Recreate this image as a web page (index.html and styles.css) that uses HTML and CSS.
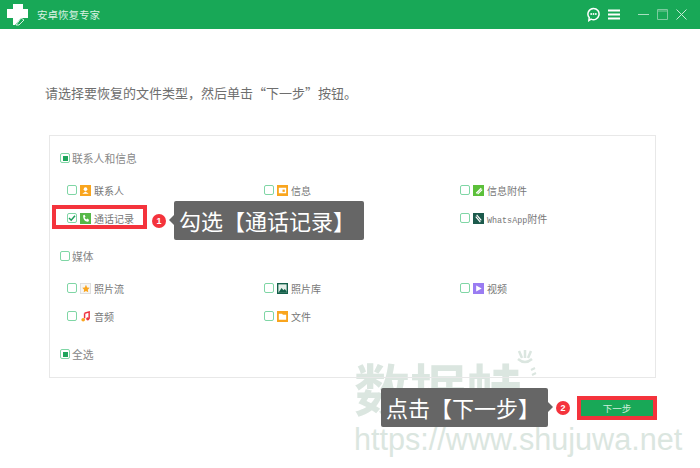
FILE: index.html
```html
<!DOCTYPE html>
<html lang="zh">
<head>
  <meta charset="UTF-8">
  <title>安卓恢复专家</title>
  <link rel="stylesheet" href="styles.css">
</head>
<body>
  <div class="titlebar">
    <svg class="logo" width="22" height="22" viewBox="0 0 22 22">
      <path d="M6 0H16V5H21V14H14L8 21H6V14H0V5H6Z" fill="#fff"/>
      <path d="M14 14L17 16L12 21H9Z" fill="none" stroke="#d5f0e0" stroke-width="1"/>
    </svg>
    <span class="app-name">安卓恢复专家</span>
    <div class="win-icons">
      <svg width="13" height="15" viewBox="0 0 14 15">
        <path d="M7 1a6 6 0 1 1-2.600 11.400L2 14l.4-3.200A6 6 0 0 1 7 1Z" fill="none" stroke="#fff" stroke-width="1.600"/>
        <circle cx="4.500" cy="7" r="1" fill="#fff"/><circle cx="7" cy="7" r="1" fill="#fff"/><circle cx="9.500" cy="7" r="1" fill="#fff"/>
      </svg>
      <svg class="menu-icon" width="12" height="11" viewBox="0 0 12 11">
        <path d="M0 1.500H12M0 5.500H12M0 9.500H12" stroke="#fff" stroke-width="2"/>
      </svg>
      <svg width="11" height="11" viewBox="0 0 11 11"><path d="M0 5.500H11" stroke="#a8dfc0"/></svg>
      <svg width="11" height="11" viewBox="0 0 11 11"><path d="M.5.5H10.500V10.500H.5ZM.5 2H10.500" fill="none" stroke="#7ccb9f"/></svg>
      <svg width="11" height="11" viewBox="0 0 11 11"><path d="M.5.5L10.500 10.500M10.500.5L.5 10.500" stroke="#c6ead6"/></svg>
    </div>
  </div>

  <div class="main">
    <p class="prompt">请选择要恢复的文件类型，然后单击“下一步”按钮。</p>

    <div class="card">
      <div class="group-head"><span class="check check-part"></span>联系人和信息</div>
      <div class="items">
        <div class="item"><span class="check"></span>
          <svg class="icon" viewBox="0 0 12 12"><rect width="12" height="12" fill="#f9a51e"/><circle cx="6" cy="4.500" r="2" fill="#fff"/><path d="M2.500 9.500L6 7l3.500 2.500Z" fill="#fff"/></svg>
          联系人</div>
        <div class="item"><span class="check"></span>
          <svg class="icon" viewBox="0 0 12 12"><rect width="12" height="12" fill="#f9a51e"/><rect x="2" y="3" width="8" height="6" fill="#fff"/><rect x="6" y="5" width="2.500" height="2.500" fill="#f9a51e"/></svg>
          信息</div>
        <div class="item"><span class="check"></span>
          <svg class="icon" viewBox="0 0 12 12"><rect width="12" height="12" fill="#5cc03a"/><path d="M3.500 9L9 3.500M5 10L10 5" stroke="#fff" stroke-width="1.400"/></svg>
          信息附件</div>

        <div class="item"><span class="check check-on"><svg viewBox="0 0 8 8"><path d="M1 4L3.200 6.200L7 1.800" fill="none" stroke="#1e9e5a" stroke-width="1.500"/></svg></span>
          <svg class="icon" viewBox="0 0 12 12"><rect width="12" height="12" fill="#55b848"/><path d="M3.500 2.500L5 2L6 4L5 5C5.500 6.200 6 6.800 7 7L8 6L10 7.500L9 9.500C6 10 3 7 3.500 2.500Z" fill="#fff"/></svg>
          通话记录</div>
        <div class="item"></div>
        <div class="item"><span class="check"></span>
          <svg class="icon" viewBox="0 0 12 12"><rect width="12" height="12" fill="#1c5a4c"/><path d="M3 4L8 10M4 2L9 8" stroke="#fff" stroke-width="1.300"/></svg>
          <span><span class="latin">WhatsApp</span>附件</span></div>
      </div>

      <div class="group-head media-head"><span class="check"></span>媒体</div>
      <div class="items">
        <div class="item"><span class="check"></span>
          <svg class="icon" viewBox="0 0 12 12"><rect x=".5" y=".5" width="11" height="11" fill="#f6f6f6" stroke="#ddd"/><path d="M6.500 2L7.800 5L10.500 5.300L8.500 7.300L9 10L6.500 8.600L4 10L4.500 7.300L2.500 5.300L5.200 5Z" fill="#f9a51e"/></svg>
          照片流</div>
        <div class="item"><span class="check"></span>
          <svg class="icon" viewBox="0 0 12 12"><rect width="12" height="12" fill="#14604a"/><rect x="1.500" y="1.500" width="9" height="9" fill="#e4efe9"/><path d="M1.500 10.500L5 5.500L7 8L8.500 6.500L10.500 9V10.500Z" fill="#14604a"/></svg>
          照片库</div>
        <div class="item"><span class="check"></span>
          <svg class="icon" viewBox="0 0 12 12"><rect width="12" height="12" fill="#9a7cf2"/><path d="M3.500 2.800L9.500 6L3.500 9.200Z" fill="#fff"/></svg>
          视频</div>

        <div class="item"><span class="check"></span>
          <svg class="icon" viewBox="0 0 12 12"><path d="M5 2.500L10 1V8.500" fill="none" stroke="#ee3340" stroke-width="1.600"/><path d="M5 2.500V8" stroke="#ee3340" stroke-width="1.600"/><circle cx="8.500" cy="8.500" r="1.800" fill="#ee3340"/><circle cx="3.500" cy="9.500" r="2" fill="#f9a51e"/></svg>
          音频</div>
        <div class="item"><span class="check"></span>
          <svg class="icon" viewBox="0 0 12 12"><rect width="12" height="12" fill="#f9a51e"/><path d="M2 3H5.500L6.500 4.200H10V9.500H2Z" fill="#fff"/></svg>
          文件</div>
      </div>

      <div class="group-head all-head"><span class="check check-part"></span>全选</div>

      <!-- annotations drawn over the first group -->
      <div class="red-box"></div>
      <div class="note-wrap">
        <span class="badge">1</span>
        <div class="callout callout-left">勾选【通话记录】</div>
      </div>
    </div>

    <div class="footer">
      <div class="callout callout-right">点击【下一步】</div>
      <span class="badge">2</span>
      <button class="next-btn">下一步</button>
    </div>
  </div>

  <div class="watermark">
    <div class="wm-cn">数据蛙</div>
    <div class="wm-url">https://www.shujuwa.net</div>
    <svg class="wm-paw" width="22" height="26" viewBox="0 0 22 26">
      <path d="M4 1L7 8M10 0V8M16 1L13 8M3 9Q10 15 17 9" fill="none" stroke="#dbe6e0" stroke-width="2.500"/>
      <path d="M16 20L20 18M17 25L21 23" stroke="#dbe6e0" stroke-width="2"/>
    </svg>
  </div>
</body>
</html>
```

FILE: styles.css
```css
html, body {
  margin: 0;
  padding: 0;
  height: 468px;
  overflow: hidden;
  background-color: #fff;
}
body {
  font-family: "Noto Sans CJK SC", sans-serif;
  color: #777;
  position: relative;
}
.titlebar {
  height: 29px;
  background-color: #18a857;
  display: flex;
  align-items: center;
  padding: 0 13px 0 7px;
  position: relative;
  z-index: 2;
}
.logo {
  margin-right: 8px;
}
.app-name {
  font-size: 10.500px;
  color: #d8f1e2;
}
.win-icons {
  margin-left: auto;
  display: flex;
  align-items: center;
  gap: 8px;
}
.menu-icon {
  margin-right: 10px;
}
.main {
  padding: 55px 44px 0 49px;
  position: relative;
  z-index: 1;
}
.prompt {
  margin: 0 0 33px -4px;
  font-size: 13px;
  line-height: 18px;
  color: #6e6e6e;
}
.card {
  border: 1px solid #e8e8e8;
  padding: 12px 10px 13px;
  position: relative;
}
.group-head {
  height: 20px;
  display: flex;
  align-items: center;
  gap: 2px;
  font-size: 10.800px;
  color: #888;
}
.media-head, .all-head {
  margin-top: 18px;
}
.items {
  display: grid;
  grid-template-columns: 197px 196px 1fr;
  grid-auto-rows: 20px;
  row-gap: 8px;
  margin-top: 12px;
  padding-left: 7px;
}
.item {
  display: flex;
  align-items: center;
  gap: 3px;
  font-size: 10px;
  color: #777;
}
.latin {
  font-family: "Liberation Mono", monospace;
  font-size: 8.400px;
}
.icon {
  width: 11px;
  height: 11px;
  flex: none;
}
.check {
  box-sizing: border-box;
  width: 10px;
  height: 10px;
  border: 1.500px solid #7fd6a5;
  border-radius: 2px;
  background-color: #fff;
  flex: none;
  display: flex;
  align-items: center;
  justify-content: center;
}
.check svg {
  width: 8px;
  height: 8px;
}
.check-part::after {
  content: "";
  width: 5px;
  height: 5px;
  background-color: #1ea55b;
}
.red-box {
  position: absolute;
  left: 2px;
  top: 69px;
  width: 87px;
  height: 16px;
  border: 4px solid #f4333c;
}
.note-wrap {
  position: absolute;
  left: 102px;
  top: 65px;
  display: flex;
  align-items: center;
  gap: 8px;
}
.badge {
  width: 14px;
  height: 14px;
  border-radius: 50%;
  background-color: #f4333c;
  color: #fff;
  font: bold 9px/14px "Liberation Sans", sans-serif;
  text-align: center;
  flex: none;
}
.callout {
  height: 39px;
  background-color: #666;
  color: #fff;
  font-size: 22px;
  line-height: 39px;
  border-radius: 2px;
  position: relative;
  white-space: nowrap;
}
.callout::after {
  content: "";
  position: absolute;
  top: 14px;
  border: 5px solid transparent;
}
.callout-left {
  padding: 0 9px 0 5px;
}
.callout-left::after {
  left: -10px;
  border-right-color: #666;
}
.callout-right {
  padding: 0 8px 0 5px;
  margin-right: 8px;
}
.callout-right::after {
  right: -10px;
  border-left-color: #666;
}
.footer {
  margin: 10px -1px 0 0;
  display: flex;
  align-items: center;
  justify-content: flex-end;
}
.next-btn {
  box-sizing: content-box;
  width: 72px;
  height: 16px;
  margin-left: 7px;
  padding: 0;
  border: 4px solid #f4333c;
  background-color: #18a857;
  color: #cfeedd;
  font-family: inherit;
  font-size: 9.500px;
}
.watermark {
  position: absolute;
  left: 354px;
  top: 352px;
  color: #dbe6e0;
}
.wm-cn {
  font-size: 56px;
  font-weight: 700;
  line-height: 70px;
  white-space: nowrap;
}
.wm-url {
  font-family: "Liberation Sans", sans-serif;
  font-size: 30.600px;
  line-height: 34px;
  white-space: nowrap;
}
.wm-paw {
  position: absolute;
  left: 161px;
  top: -2px;
}
```
